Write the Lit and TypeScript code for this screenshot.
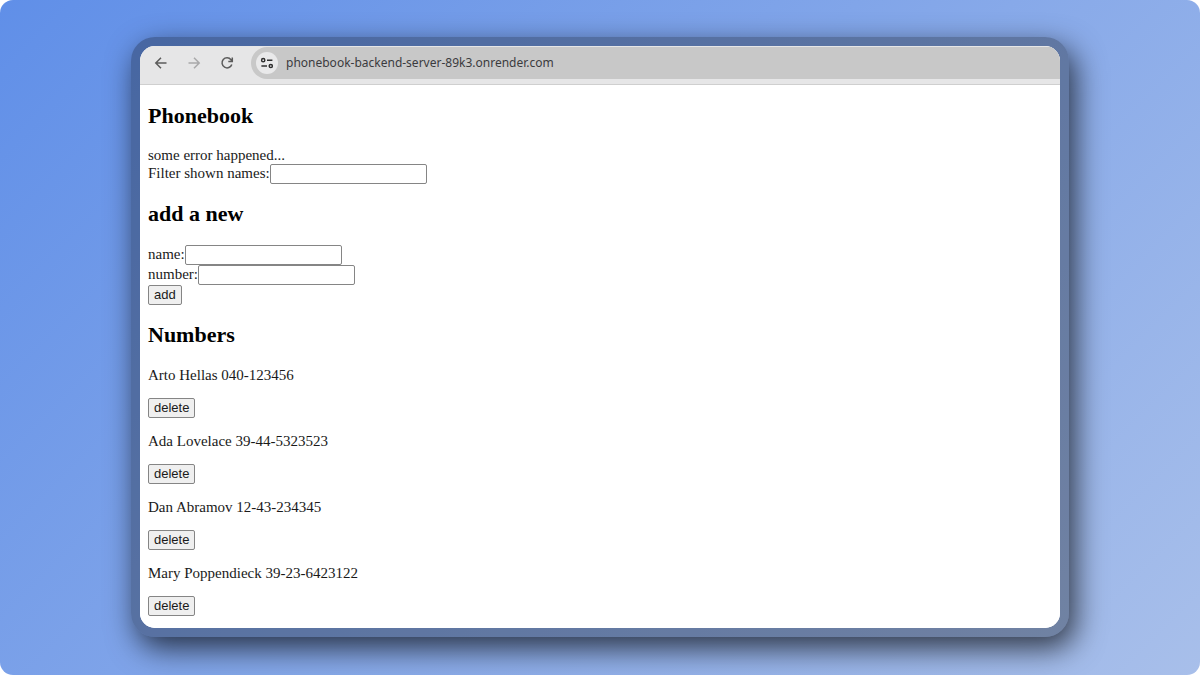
import { LitElement, html, css } from "lit";
import { customElement, state } from "lit/decorators.js";

interface Person {
  name: string;
  number: string;
}

@customElement("browser-toolbar")
export class BrowserToolbar extends LitElement {
  static styles = css`
    :host {
      display: block;
    }
    .bar {
      display: flex;
      align-items: flex-start;
      box-sizing: border-box;
      height: 39px;
      padding: 1px 0 4px 11px;
      background: #e6e6e7;
      border-bottom: 1px solid #cfcfcf;
    }
    .nav {
      display: flex;
      gap: 13px;
      padding-top: 6px;
    }
    .icon {
      display: block;
      width: 20px;
      height: 20px;
      padding: 0;
      border: 0;
      background: none;
      color: #5c5c5c;
    }
    .icon:disabled {
      color: #a9a9aa;
    }
    svg {
      display: block;
      fill: none;
      stroke: currentColor;
      stroke-width: 1.5;
    }
    .address {
      display: flex;
      flex: 1;
      align-items: center;
      gap: 8px;
      height: 32px;
      margin-left: 14px;
      padding-left: 5px;
      border-radius: 16px 0 0 16px;
      background: #c8c8c8;
    }
    .site {
      display: grid;
      place-items: center;
      width: 22px;
      height: 22px;
      padding: 0;
      border: 0;
      border-radius: 50%;
      background: #e9e9ea;
      color: #303030;
    }
    .url {
      flex: 1;
      min-width: 0;
      padding: 0;
      border: 0;
      outline: 0;
      background: none;
      color: #3b3b3e;
      font: 12px/20px "Noto Sans", "Open Sans", sans-serif;
    }
  `;

  render() {
    return html`
      <div class="bar">
        <div class="nav">
          <button class="icon" aria-label="Back">
            <svg width="20" height="20" viewBox="0 0 20 20">
              <path d="M15.5 10H5M10 4.8L4.8 10L10 15.2" />
            </svg>
          </button>
          <button class="icon" aria-label="Forward" disabled>
            <svg width="20" height="20" viewBox="0 0 20 20">
              <path d="M4.5 10H15M10 4.8L15.2 10L10 15.2" />
            </svg>
          </button>
          <button class="icon" aria-label="Reload">
            <svg width="20" height="20" viewBox="0 0 20 20">
              <path d="M14.8 11.4A5 5 0 1 1 14 6.8L15 8M15.3 4.4V8.4H11.3" />
            </svg>
          </button>
        </div>
        <div class="address">
          <button class="site" aria-label="Site information">
            <svg width="14" height="14" viewBox="0 0 14 14">
              <circle cx="3.2" cy="4.2" r="1.6" />
              <path d="M7 4.2H12.4M1.4 10H7" />
              <circle cx="10.8" cy="10" r="1.6" />
            </svg>
          </button>
          <input
            class="url"
            aria-label="Address"
            .value=${"phonebook-backend-server-89k3.onrender.com"}
          />
        </div>
      </div>
    `;
  }
}

@customElement("phone-book")
export class PhoneBook extends LitElement {
  static styles = css`
    :host {
      display: block;
      padding: 18px 8px 12px;
      background: #fff;
      color: #1a1a1a;
      font: 15px/17px "Liberation Serif", serif;
    }
    h2 {
      margin: 17px 0 19px;
      color: #000;
      font-size: 22px;
      line-height: 25px;
    }
    h2:first-child {
      margin-top: 0;
    }
    .row {
      display: flex;
      align-items: center;
      height: 20px;
    }
    .field {
      box-sizing: border-box;
      width: 157px;
      height: 20px;
      padding: 1px 2px;
      border: 1px solid #858585;
      border-radius: 2px;
      background: #fff;
      font: 13px "Liberation Sans", sans-serif;
    }
    .button {
      display: block;
      box-sizing: border-box;
      height: 20px;
      padding: 0 5px;
      border: 1px solid #858585;
      border-radius: 2px;
      background: #efefef;
      color: #1a1a1a;
      font: 13px/16px "Liberation Sans", sans-serif;
    }
    p {
      margin: 0 0 13px;
      line-height: 19px;
    }
    .person + .person {
      margin-top: 14px;
    }
  `;

  @state() private people: Person[] = [
    { name: "Arto Hellas", number: "040-123456" },
    { name: "Ada Lovelace", number: "39-44-5323523" },
    { name: "Dan Abramov", number: "12-43-234345" },
    { name: "Mary Poppendieck", number: "39-23-6423122" },
  ];

  private remove(person: Person) {
    this.people = this.people.filter((p) => p !== person);
  }

  render() {
    return html`
      <h2>Phonebook</h2>
      <div>some error happened...</div>
      <div class="row">
        <label for="filter">Filter shown names:</label>
        <input class="field" id="filter" />
      </div>
      <h2>add a new</h2>
      <form @submit=${(e: Event) => e.preventDefault()}>
        <div class="row">
          <label for="name">name:</label>
          <input class="field" id="name" />
        </div>
        <div class="row">
          <label for="number">number:</label>
          <input class="field" id="number" />
        </div>
        <button class="button" type="submit">add</button>
      </form>
      <h2>Numbers</h2>
      ${this.people.map(
        (person) => html`
          <div class="person">
            <p>${person.name} ${person.number}</p>
            <button class="button" @click=${() => this.remove(person)}>delete</button>
          </div>
        `
      )}
    `;
  }
}

@customElement("app-root")
export class AppRoot extends LitElement {
  static styles = css`
    :host {
      display: block;
      background: #fff;
    }
    .stage {
      display: flex;
      align-items: center;
      box-sizing: border-box;
      min-height: 100vh;
      padding: 24px calc(11% - 1px) 26px;
      border-radius: 13px;
      background: linear-gradient(135deg, #608fe8, #a8bfea);
    }
    .frame {
      flex: 1;
      min-width: 0;
      padding: 9px;
      border-radius: 24px;
      background: rgba(0, 0, 0, 0.3);
      box-shadow: 6px 11px 30px rgba(0, 0, 0, 0.7);
    }
    .window {
      overflow: hidden;
      border-radius: 15px;
      background: #fff;
    }
  `;

  render() {
    return html`
      <main class="stage">
        <div class="frame">
          <div class="window">
            <browser-toolbar></browser-toolbar>
            <phone-book></phone-book>
          </div>
        </div>
      </main>
    `;
  }
}
